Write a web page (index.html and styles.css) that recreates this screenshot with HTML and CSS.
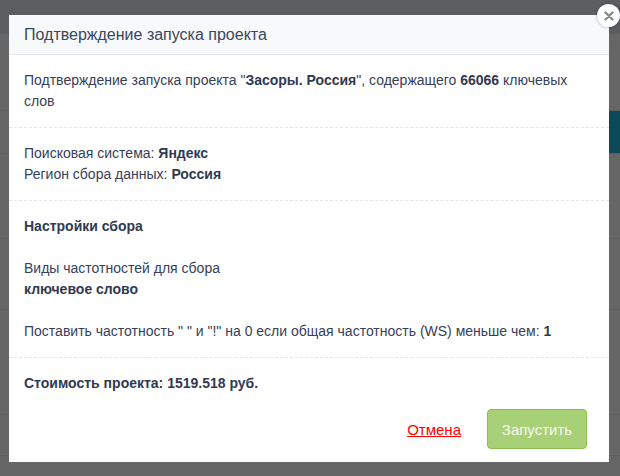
FILE: index.html
```html
<!DOCTYPE html>
<html lang="ru">
<head>
<meta charset="utf-8">
<title>Подтверждение запуска проекта</title>
<link rel="stylesheet" href="styles.css">
</head>
<body>
<div class="page">
  <div class="topbar"></div>
  <div class="row r1"></div>
  <div class="row r2"><div class="teal"></div></div>
  <div class="row r3"></div>
  <div class="row r4"></div>
  <div class="row r5"></div>
  <div class="row r6"></div>
</div>

<div class="modal">
  <div class="modal-header">
    <h4 class="modal-title">Подтверждение запуска проекта</h4>
  </div>
  <div class="section">
    Подтверждение запуска проекта "<b>Засоры. Россия</b>", содержащего <b>66066</b> ключевых слов
  </div>
  <div class="section">
    Поисковая система: <b>Яндекс</b><br>
    Регион сбора данных: <b>Россия</b>
  </div>
  <div class="section">
    <b>Настройки сбора</b><br><br>
    Виды частотностей для сбора<br>
    <b>ключевое слово</b><br><br>
    Поставить частотность " " и "!" на 0 если общая частотность (WS) меньше чем: <b>1</b>
  </div>
  <div class="section cost">
    <b>Стоимость проекта: 1519.518 руб.</b>
  </div>
  <div class="modal-footer">
    <a class="cancel" href="#">Отмена</a>
    <button class="btn-start" type="button">Запустить</button>
  </div>
  <div class="close">
    <svg width="10" height="10" viewBox="0 0 10 10"><path d="M1.5 1.5 L8.5 8.5 M8.5 1.5 L1.5 8.5" stroke="#8a8a8a" stroke-width="2.4" stroke-linecap="round"/></svg>
  </div>
</div>
</body>
</html>
```

FILE: styles.css
```css
html, body {
  margin: 0;
  padding: 0;
}
body {
  width: 620px;
  height: 476px;
  overflow: hidden;
  background: #666666;
  font-family: "Liberation Sans", Arial, sans-serif;
  position: relative;
}
.page {
  display: flex;
  flex-direction: column;
}
.topbar {
  height: 34px;
  background: #5c5d5f;
}
.row {
  border-bottom: 1px solid #5e5e5e;
  display: flex;
  justify-content: flex-end;
}
.r1 { height: 76px; }
.r2 { height: 42px; }
.teal {
  width: 11px;
  height: 42px;
  background: #0c4857;
}
.r3 { height: 84px; }
.r4 { height: 70px; }
.r5 { height: 104px; }
.r6 { height: 40px; }

.modal {
  position: absolute;
  left: 9px;
  top: 15px;
  width: 600px;
  height: 447px;
  background: #ffffff;
  display: flex;
  flex-direction: column;
  color: #36405a;
  font-size: 14px;
  line-height: 21px;
}
.modal-header {
  background: #f7f9fb;
  border-bottom: 1px solid #e2e7ee;
  height: 39px;
  padding: 0 15px;
  display: flex;
  align-items: center;
}
.modal-title {
  margin: 0;
  font-size: 16px;
  font-weight: normal;
  color: #3b465c;
  line-height: 22px;
}
.section {
  padding: 15px 15px;
}
.section + .section {
  border-top: 1px dashed #e6e6e6;
}
.section b {
  color: #2f3a52;
}
.cost {
  padding-bottom: 15px;
}
.modal-footer {
  display: flex;
  justify-content: flex-end;
  align-items: center;
  gap: 26px;
  padding: 0 22px 0 15px;
}
.cancel {
  color: #ff0000;
  font-size: 15px;
  text-decoration: underline;
}
.btn-start {
  width: 100px;
  height: 40px;
  background: #a8d076;
  border: 1px solid #8cc04a;
  border-radius: 4px;
  color: #f6faf0;
  font-family: "Liberation Sans", Arial, sans-serif;
  font-size: 15px;
  padding: 0;
}
.close {
  position: absolute;
  right: -11px;
  top: -11px;
  width: 23px;
  height: 23px;
  border-radius: 50%;
  background: #ffffff;
  box-shadow: 0 0 3px rgba(0, 0, 0, 0.35);
  display: flex;
  align-items: center;
  justify-content: center;
}
```
